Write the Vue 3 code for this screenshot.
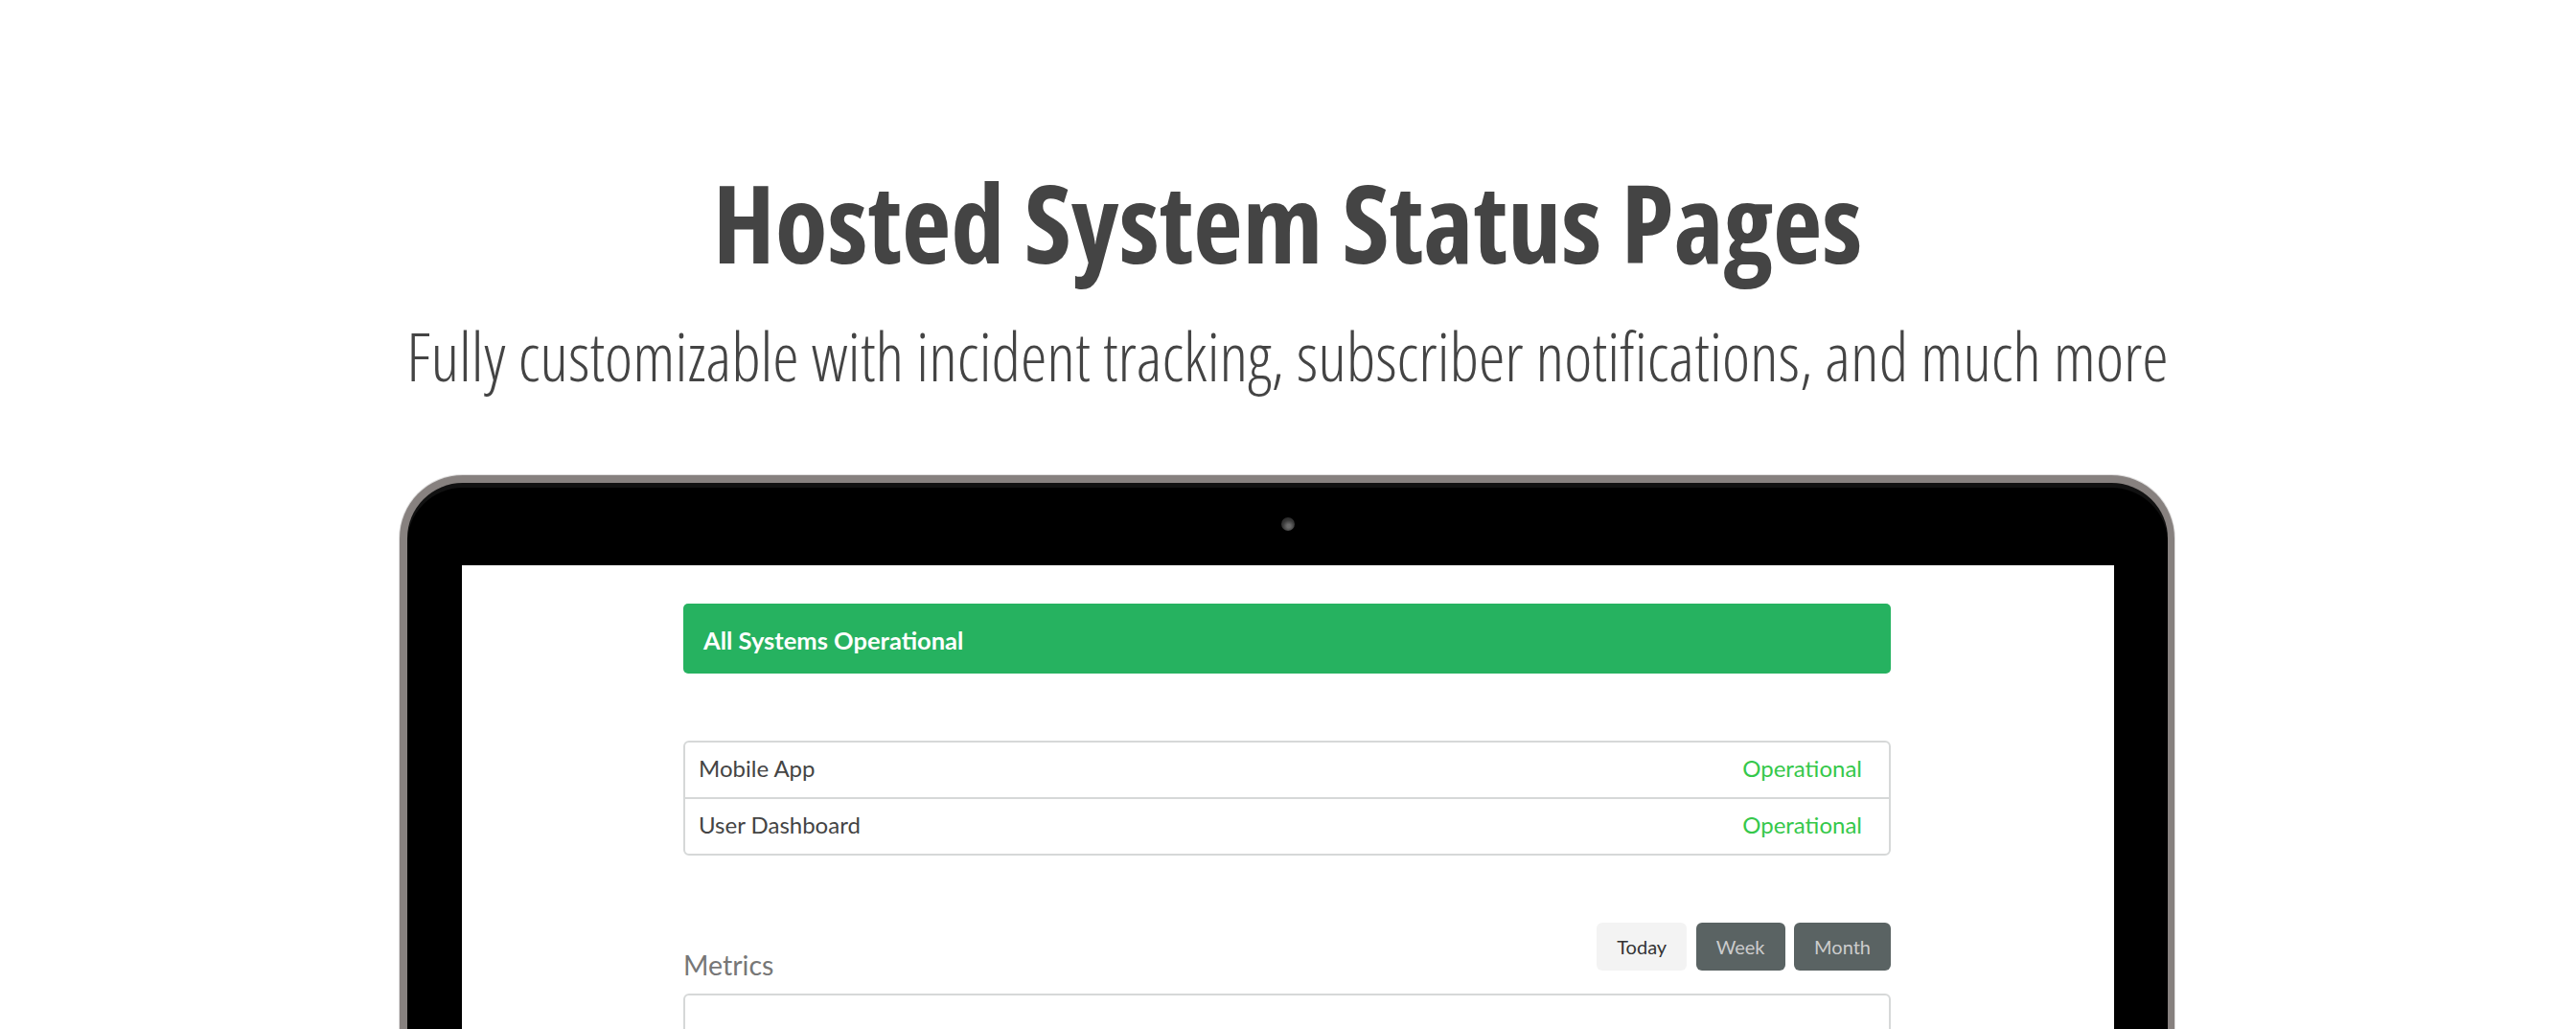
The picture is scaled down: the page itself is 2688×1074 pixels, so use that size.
<script setup>
const services = [
  { name: 'Mobile App', status: 'Operational' },
  { name: 'User Dashboard', status: 'Operational' },
]
const ranges = [
  { label: 'Today', active: true },
  { label: 'Week', active: false },
  { label: 'Month', active: false },
]
</script>

<template>
  <main class="page">
    <header class="hero">
      <h1 class="title">Hosted System Status Pages</h1>
      <p class="subtitle">Fully customizable with incident tracking, subscriber notifications, and much more</p>
    </header>
    <section class="laptop">
      <div class="bezel">
        <span class="camera"></span>
      </div>
      <div class="screen">
        <div class="status-page">
          <div class="banner">All Systems Operational</div>
          <ul class="services">
            <li v-for="s in services" :key="s.name" class="service">
              <span>{{ s.name }}</span>
              <span class="ok">{{ s.status }}</span>
            </li>
          </ul>
          <div class="metrics-head">
            <h2 class="metrics-title">Metrics</h2>
            <div class="ranges">
              <button v-for="r in ranges" :key="r.label" class="range" :class="{ active: r.active }">{{ r.label }}</button>
            </div>
          </div>
          <div class="metrics-box"></div>
        </div>
      </div>
    </section>
  </main>
</template>

<style>
html, body { margin: 0; background: #fff; }
</style>

<style scoped>
.page {
  height: 1074px;
  width: 2688px;
  overflow: hidden;
  background: #fff;
  display: flex;
  flex-direction: column;
  align-items: center;
  padding-top: 164px;
  box-sizing: border-box;
}
.hero { text-align: center; color: #444; font-family: "Open Sans", sans-serif; font-stretch: 75%; margin-right: 1px; }
.title { margin: 0; font-size: 112.3px; line-height: 136px; font-weight: 700; white-space: nowrap; }
.subtitle { margin: 25px 0 0; font-size: 69.4px; line-height: 92px; font-weight: 300; white-space: nowrap; }
.laptop {
  margin-top: 79px;
  margin-right: 2px;
  width: 1852px;
  flex: none;
  box-sizing: border-box;
  border: 8px solid #87817f;
  border-right-width: 7px;
  border-bottom: 0;
  border-radius: 66px 66px 0 0;
  background: #000;
  box-shadow: 0 0 0 1px #dedddd, inset 0 5px 0 #111;
  padding: 0 56px 0 57px;
}
.bezel { height: 86px; display: flex; align-items: center; justify-content: center; }
.camera {
  width: 14px; height: 14px; border-radius: 50%;
  background: radial-gradient(circle at 55% 65%, #6a6a6a 0 15%, #3a3a3a 50%, #1c1c1c 100%);
  margin-top: -1px;
}
.screen { background: #fff; height: 600px; font-family: Lato, sans-serif; padding-top: 40px; box-sizing: border-box; }
.status-page { width: 1260px; margin-left: 231px; }
.banner {
  height: 73px; line-height: 76px; background: #26b260; color: #fff;
  border-radius: 5px; padding-left: 21px; font-size: 25.5px; font-weight: 700;
}
.services {
  list-style: none; margin: 70px 0 0; padding: 0;
  border: 2px solid #d6d8d8; border-radius: 6px; color: #444; font-size: 24px;
}
.service {
  height: 57px; display: flex; align-items: center; justify-content: space-between;
  padding: 0 28px 5px 14px;
  box-sizing: border-box;
}
.service + .service { border-top: 2px solid #d6d8d8; height: 59px; }
.ok { color: #35c84a; }
.metrics-head { display: flex; justify-content: space-between; align-items: flex-end; margin-top: 70px; }
.metrics-title { margin: 0 0 13px; font-size: 28.5px; line-height: 34px; font-weight: 400; color: #777; }
.ranges { display: flex; gap: 9.5px; margin-bottom: 24px; }
.range {
  height: 50px; padding: 0 21px; border: 0; border-radius: 6px; font: 400 20px Lato, sans-serif;
  background: #5a6363; color: #ccc;
}
.range.active { background: #f3f3f3; color: #333; }
.metrics-box { height: 120px; border: 2px solid #d6d8d8; border-radius: 6px; }
</style>
